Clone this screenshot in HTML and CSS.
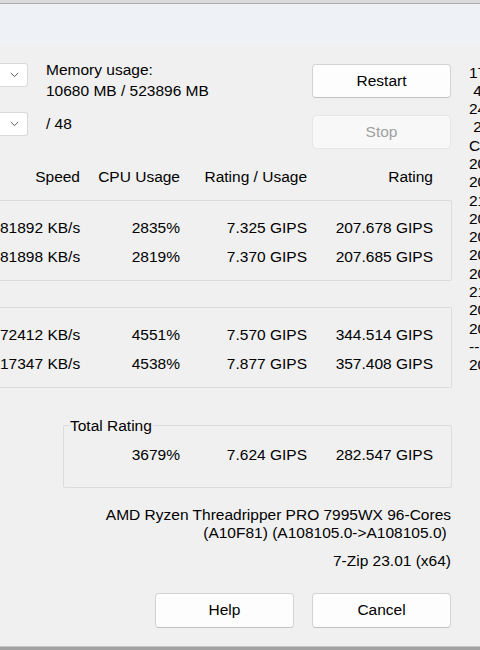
FILE: index.html
```html
<!DOCTYPE html>
<html lang="en">
<head>
<meta charset="utf-8">
<title>Benchmark</title>
<link rel="stylesheet" href="styles.css">
</head>
<body>
<div class="page">
  <div class="topstrip"></div>
  <div class="header"></div>
  <div class="dialog">
    <div class="main">
      <div class="top">
        <div class="combos">
          <div class="combo"><svg width="9" height="6" viewBox="0 0 9 6"><path d="M0.8 1 L4.5 4.6 L8.2 1" fill="none" stroke="#5a5a5a" stroke-width="1"/></svg></div>
          <div class="combo"><svg width="9" height="6" viewBox="0 0 9 6"><path d="M0.8 1 L4.5 4.6 L8.2 1" fill="none" stroke="#5a5a5a" stroke-width="1"/></svg></div>
        </div>
        <div class="mem">
          <div>Memory usage:</div>
          <div>10680 MB / 523896 MB</div>
          <div class="threads">/ 48</div>
        </div>
        <div class="buttons">
          <button class="btn">Restart</button>
          <button class="btn disabled">Stop</button>
        </div>
      </div>

      <div class="grid thead">
        <div>Speed</div><div>CPU Usage</div><div>Rating / Usage</div><div>Rating</div>
      </div>

      <div class="group">
        <div class="grid">
          <div>81892 KB/s</div><div>2835%</div><div>7.325 GIPS</div><div>207.678 GIPS</div>
          <div>81898 KB/s</div><div>2819%</div><div>7.370 GIPS</div><div>207.685 GIPS</div>
        </div>
      </div>

      <div class="group group2">
        <div class="grid">
          <div>72412 KB/s</div><div>4551%</div><div>7.570 GIPS</div><div>344.514 GIPS</div>
          <div>17347 KB/s</div><div>4538%</div><div>7.877 GIPS</div><div>357.408 GIPS</div>
        </div>
      </div>

      <div class="total">
        <span class="legend">Total Rating</span>
        <div class="grid grid3">
          <div>3679%</div><div>7.624 GIPS</div><div>282.547 GIPS</div>
        </div>
      </div>

      <div class="cpu">
        <div>AMD Ryzen Threadripper PRO 7995WX 96-Cores</div>
        <div class="pre">(A10F81) (A108105.0-&gt;A108105.0) </div>
      </div>
      <div class="version">7-Zip 23.01 (x64)</div>

      <div class="actions">
        <button class="btn big">Help</button>
        <button class="btn big">Cancel</button>
      </div>
    </div>
    <div class="side">
      <div class="ln">17</div>
      <div class="ln"> 4</div>
      <div class="ln">24</div>
      <div class="ln"> 2</div>
      <div class="ln">C</div>
      <div class="ln">20</div>
      <div class="ln">20</div>
      <div class="ln">21</div>
      <div class="ln">20</div>
      <div class="ln">20</div>
      <div class="ln">20</div>
      <div class="ln">20</div>
      <div class="ln">21</div>
      <div class="ln">20</div>
      <div class="ln">20</div>
      <div class="ln">--</div>
      <div class="ln">20</div>
    </div>
  </div>
  <div class="bottomstrip"></div>
</div>
</body>
</html>
```

FILE: styles.css
```css
html, body {
  margin: 0;
  padding: 0;
  width: 480px;
  height: 650px;
  overflow: hidden;
  background: #f0f0f0;
}

body {
  font-family: "Liberation Sans", Arial, sans-serif;
  font-size: 15.5px;
  color: #000;
}

.page {
  display: flex;
  flex-direction: column;
  height: 650px;
  overflow: hidden;
}

.topstrip {
  flex: none;
  height: 3px;
  background: #dadada;
  border-bottom: 1px solid #a9adb2;
}

.header {
  flex: none;
  height: 40px;
  background: #eef2f7;
}

.dialog {
  flex: none;
  display: flex;
  align-items: flex-start;
}

.main {
  width: 452px;
  flex: none;
  display: flex;
  flex-direction: column;
}

.top {
  display: flex;
  align-items: flex-start;
  height: 105px;
}

.combos {
  margin-top: 19px;
  width: 28px;
  display: flex;
  flex-direction: column;
  gap: 25px;
}

.combo {
  height: 24px;
  box-sizing: border-box;
  background: #fff;
  border: 1px solid #d9d9d9;
  border-left: none;
  border-radius: 0 3px 3px 0;
  display: flex;
  align-items: center;
  justify-content: center;
  padding-left: 2px;
}

.mem {
  margin-left: 18px;
  margin-top: 14.5px;
  line-height: 21px;
  flex: 1;
}

.threads {
  margin-top: 12px;
}

.buttons {
  width: 139px;
  margin-top: 20px;
  margin-right: 1px;
  display: flex;
  flex-direction: column;
  gap: 17px;
}

.btn {
  font: inherit;
  color: #000;
  height: 34px;
  width: 139px;
  box-sizing: border-box;
  background: #fdfdfd;
  border: 1px solid #d3d3d3;
  border-bottom-color: #c2c2c2;
  border-radius: 4px;
  padding: 0;
}

.btn.disabled {
  background: #f8f8f8;
  border-color: #e6e6e6;
  color: #9f9f9f;
}

.btn.big {
  height: 35px;
}

.grid {
  display: grid;
  grid-template-columns: 80px 100px 127px 126px;
  text-align: right;
  white-space: nowrap;
}

.thead {
  margin-top: 19.3px;
  line-height: 18px;
}

.group {
  margin-top: 13.7px;
  box-sizing: border-box;
  width: 452px;
  border: 1px solid #dcdcdc;
  border-left: none;
  border-radius: 0 2px 2px 0;
  padding: 12px 0 9px;
  line-height: 29px;
}

.group2 {
  margin-top: 26px;
}

.total {
  position: relative;
  margin-top: 37px;
  margin-left: 63px;
  width: 389px;
  box-sizing: border-box;
  border: 1px solid #dcdcdc;
  border-radius: 2px;
  padding: 14px 0 18px;
  line-height: 29px;
}

.grid3 {
  grid-template-columns: 116px 127px 126px;
}

.legend {
  position: absolute;
  top: -9.3px;
  left: 5px;
  padding: 0 1px;
  line-height: 18px;
  background: #f0f0f0;
}

.cpu {
  margin-top: 17.8px;
  padding-right: 1px;
  text-align: right;
  line-height: 18.3px;
}

.pre {
  white-space: pre;
}

.version {
  margin-top: 9.4px;
  padding-right: 1px;
  text-align: right;
  line-height: 18.3px;
}

.actions {
  margin-top: 22.5px;
  padding-right: 1px;
  display: flex;
  justify-content: flex-end;
  gap: 18px;
}

.side {
  padding-left: 17px;
  padding-top: 19.5px;
  line-height: 18.3px;
  white-space: nowrap;
}

.ln {
  white-space: pre;
}

.bottomstrip {
  flex: none;
  margin-top: auto;
  height: 3px;
  background: #a2a2a2;
  border-top: 1px solid #c6c6c6;
}
```
